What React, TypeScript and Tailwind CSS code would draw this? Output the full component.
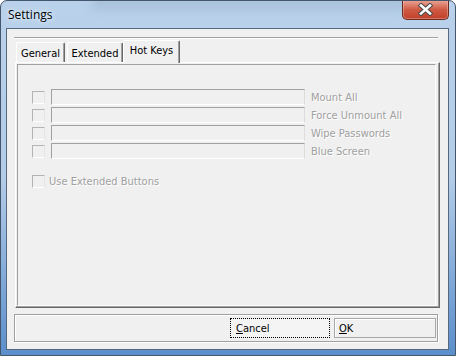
import type { ReactNode } from 'react';

const uiFont = 'font-["DejaVu_Sans_Condensed","Liberation_Sans",sans-serif] text-[11px] leading-[13px]';
const disabledText = 'text-[#a0a0a0] [text-shadow:1px_1px_0_#ffffff]';

const hotKeys = ['Mount All', 'Force Unmount All', 'Wipe Passwords', 'Blue Screen'];

export default function App() {
  return (
    <div className="relative flex h-[356px] w-[456px] flex-col overflow-hidden rounded-t-[7px] border border-[#44566c] bg-gradient-to-b from-[#b9d1ea] via-[#b3cce8] to-[#5b8fcb]">
      <TitleBar />
      <div className="flex px-[5px] pr-[6px]">
        <div className="flex h-[322px] w-[443px] flex-col border border-[#55687e] bg-[#f0f0f0]">
          <div className="ml-[7px] mt-[8px] h-[2px] w-[424px] border-t border-b border-t-[#a0a0a0] border-b-white" />
          <TabStrip />
          <TabPanel />
          <ButtonBar />
        </div>
      </div>
    </div>
  );
}

function TitleBar() {
  return (
    <div className="relative h-[27px] shrink-0">
      <div className="absolute left-[90px] top-[-4px] h-[12px] w-[320px] rounded-full bg-[#8ea8c4] opacity-40 blur-[5px]" />
      <div className="relative pl-[7px] pt-[6px] font-['Open_Sans',sans-serif] text-[12px] leading-[16px] text-black [text-shadow:0_0_6px_#e8f2fc,0_0_3px_#e8f2fc]">
        Settings
      </div>
      <CloseButton />
    </div>
  );
}

function CloseButton() {
  return (
    <div className="absolute right-[6px] top-[-1px] flex h-[20px] w-[47px] items-center justify-center rounded-b-[5px] border border-t-0 border-[#6b2a20] bg-gradient-to-b from-[#e9a89a] via-[#cf5a44] to-[#c0402a] shadow-[inset_0_0_0_1px_rgba(255,220,210,0.35)]">
      <svg width="15" height="13" viewBox="0 0 15 13">
        <path d="M3 2.5 L12 10.5 M12 2.5 L3 10.5" stroke="#4a4a4a" strokeWidth="4.6" strokeLinecap="square" />
        <path d="M3 2.5 L12 10.5 M12 2.5 L3 10.5" stroke="#ffffff" strokeWidth="2.6" strokeLinecap="square" />
      </svg>
    </div>
  );
}

function TabStrip() {
  return (
    <div className={`relative z-10 ml-[9px] mt-[1px] flex h-[22px] items-end ${uiFont}`}>
      <Tab width="w-[49px]">General</Tab>
      <div className="ml-[2px]">
        <Tab width="w-[56px]">Extended</Tab>
      </div>
      <Tab width="w-[57px]" selected>
        Hot Keys
      </Tab>
    </div>
  );
}

type TabProps = {
  readonly width: string;
  readonly selected?: boolean;
  readonly children: ReactNode;
};

function Tab({ width, selected, children }: TabProps) {
  return (
    <div
      className={`${width} flex justify-center rounded-t-[2px] border-l border-r border-t border-l-white border-r-[#696969] border-t-white bg-[#f0f0f0] text-black shadow-[inset_-1px_0_0_#a0a0a0] ${
        selected ? '-mb-px h-[23px] pt-[3px]' : 'h-[20px] pt-[4px]'
      }`}
    >
      {children}
    </div>
  );
}

function TabPanel() {
  return (
    <div className="ml-[8px] h-[246px] w-[425px] border border-b-[#696969] border-l-white border-r-[#696969] border-t-white p-px shadow-[inset_-1px_-1px_0_#a0a0a0]">
      <div className={`h-full w-[419px] border border-b-white border-l-[#a0a0a0] border-r-white border-t-[#a0a0a0] pl-[14px] pt-[24px] ${uiFont}`}>
        <div className="flex flex-col gap-[2px]">
          {hotKeys.map((label) => (
            <HotKeyRow key={label} label={label} />
          ))}
        </div>
        <div className="mt-[16px] flex h-[13px] items-center">
          <Checkbox />
          <span className={`ml-[4px] ${disabledText}`}>Use Extended Buttons</span>
        </div>
      </div>
    </div>
  );
}

function HotKeyRow({ label }: { label: string }) {
  return (
    <div className="flex h-[16px] items-center">
      <Checkbox />
      <div className="ml-[6px] h-[16px] w-[254px] border border-b-white border-l-[#a0a0a0] border-r-[#dcdcdc] border-t-[#a0a0a0]" />
      <span className={`ml-[6px] ${disabledText}`}>{label}</span>
    </div>
  );
}

function Checkbox() {
  return <div className="h-[13px] w-[13px] shrink-0 border border-b-white border-l-[#b4b4b4] border-r-[#e4e4e4] border-t-[#b4b4b4] bg-[#f0f0f0]" />;
}

function ButtonBar() {
  return (
    <div className={`ml-[7px] mt-[6px] flex h-[28px] w-[424px] justify-end gap-[4px] border border-[#a0a0a0] pr-px pt-[3px] shadow-[1px_1px_0_#ffffff,inset_1px_1px_0_#ffffff] ${uiFont}`}>
      <button className="h-[20px] w-[100px] border border-dotted border-black bg-[#f4f4f4] pl-[5px] text-left text-black">
        <span className="underline underline-offset-[1px]">C</span>ancel
      </button>
      <button className="h-[20px] w-[102px] border border-[#a8a8a8] bg-[#f0f0f0] pl-[4px] text-left text-black shadow-[inset_1px_1px_0_#ffffff]">
        <span className="underline underline-offset-[1px]">O</span>K
      </button>
    </div>
  );
}
